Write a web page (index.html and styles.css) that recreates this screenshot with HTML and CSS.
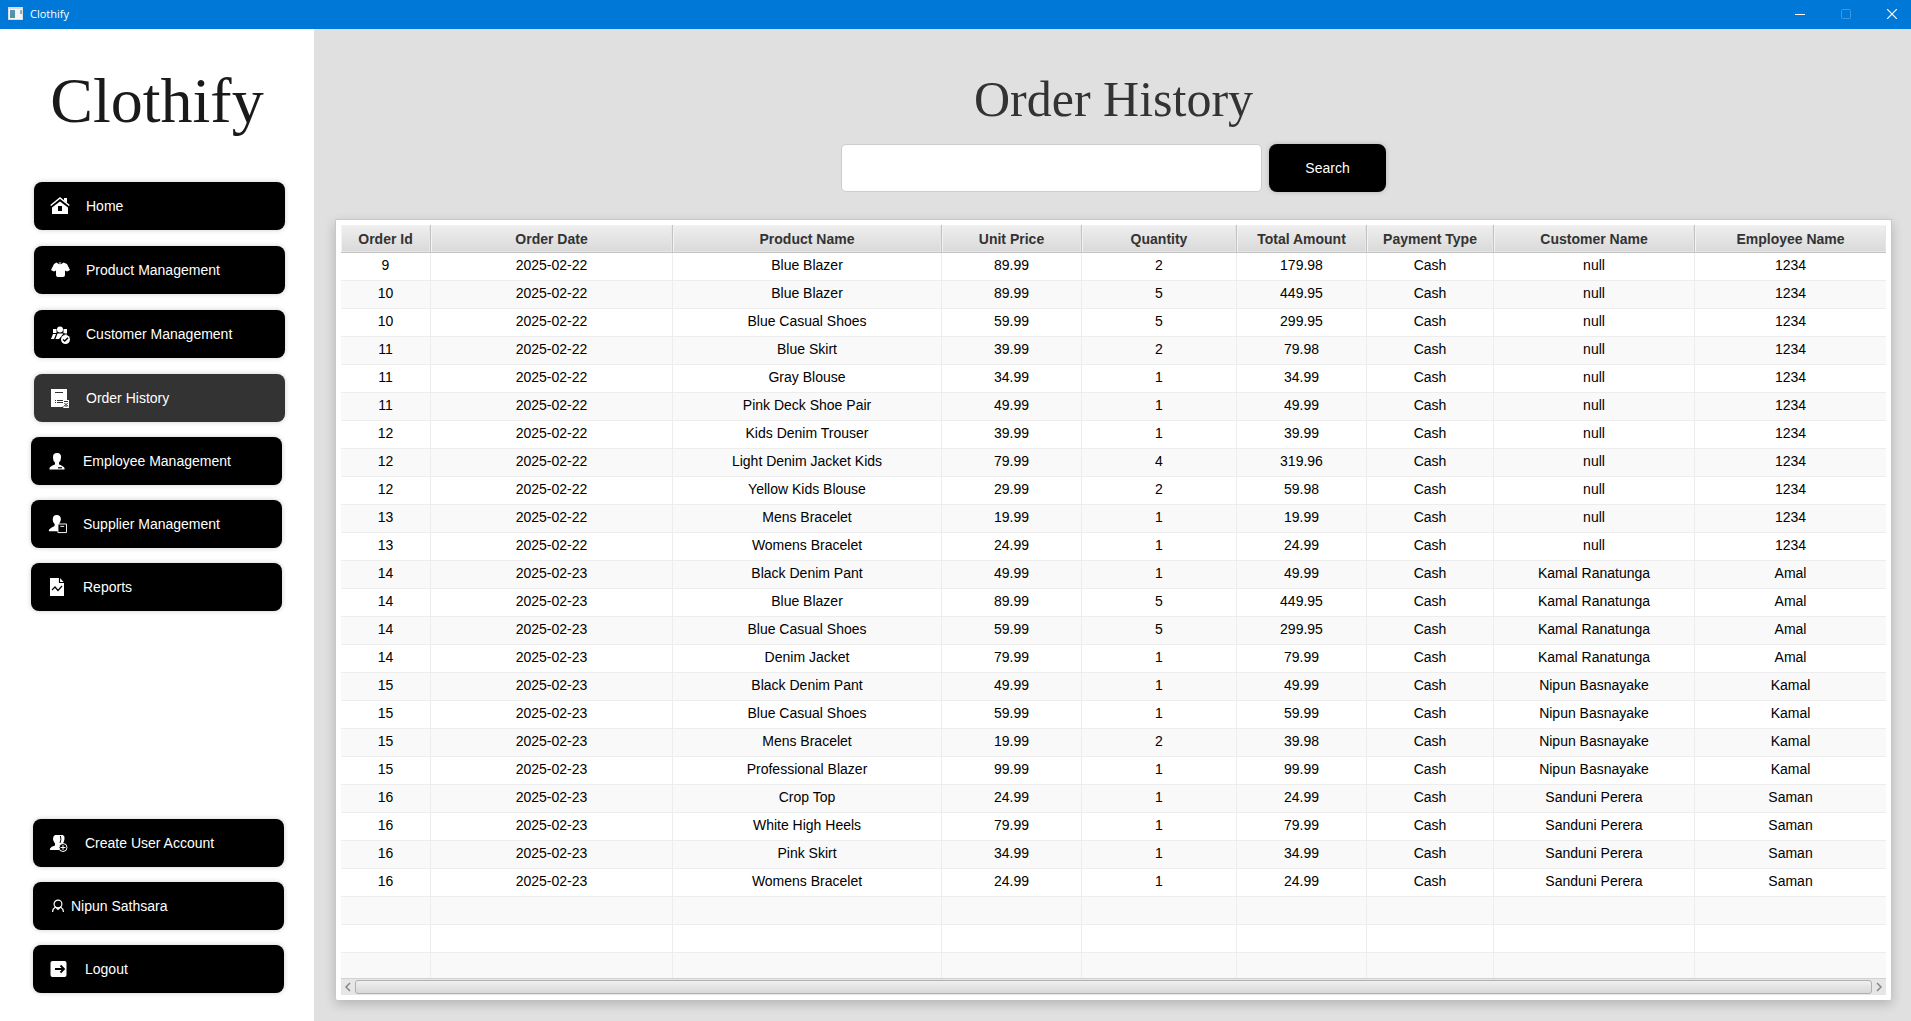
FILE: index.html
```html
<!DOCTYPE html>
<html lang="en">
<head>
<meta charset="utf-8">
<title>Clothify</title>
<link rel="stylesheet" href="styles.css">
</head>
<body>
<header class="titlebar">
  <svg class="app-icon" viewBox="0 0 15 13" aria-hidden="true"><rect width="15" height="13" fill="#d9dcde"/><rect x="1" y="2" width="13" height="10" fill="#f4f4f4"/><rect x="2" y="3" width="5" height="8" fill="#4c9a8c"/><path d="M2 3h5v3L2 9z" fill="#5b8fb5"/><rect x="12" y="3" width="2" height="4" fill="#7fb5b0"/></svg>
  <span class="titlebar-name">Clothify</span>
  <div class="window-controls">
    <button type="button" aria-label="Minimize"><svg viewBox="0 0 10 10"><path d="M0 5.5h10" stroke="#fff"/></svg></button>
    <button type="button" aria-label="Maximize" disabled><svg viewBox="0 0 10 10"><rect x=".5" y=".5" width="9" height="9" rx="1" fill="none" stroke="#3d98e4"/></svg></button>
    <button type="button" aria-label="Close"><svg viewBox="0 0 10 10"><path d="M0 0l10 10M10 0L0 10" stroke="#fff" stroke-width="1.2"/></svg></button>
  </div>
</header>
<div class="app">
  <aside class="sidebar">
    <div class="brand">Clothify</div>
    <nav class="nav">
      <div class="nav-group nav-group-shop">
        <button type="button" class="nav-button"><svg class="icon" viewBox="0 0 20 20"><path fill="#fff" d="M10 5.500l8 6V18H2v-6.500z"/><path fill="none" stroke="#fff" stroke-width="1.500" d="M.7 9.500L10 2l9.300 7.500"/><path fill="#fff" d="M14 2h3v5l-3-2.500z"/><path d="M8 10h4v5H8z"/></svg>Home</button>
        <button type="button" class="nav-button"><svg class="icon" viewBox="0 0 20 20"><path fill="#fff" d="M6.500 2.500Q10 6 13.500 2.500L17 4l3 6-3 1.500-2-1V15q0 2-2 2H8q-2 0-2-2v-4.500l-2 1L1 10l3-6z"/><path fill="#fff" d="M8.500 2.500h3L10 4z"/></svg>Product Management</button>
        <button type="button" class="nav-button"><svg class="icon" viewBox="0 0 20 20"><g fill="#fff"><circle cx="10" cy="5.500" r="3"/><path d="M3 5h3.500v4H3zM13.500 5H17v4h-3.500zM1 15l2-5h3l-2 5zM5.500 15l2-5.500h6L9 15zM14.500 9.500H17v1h-2.500z"/><circle cx="15.500" cy="15.500" r="4.500"/></g><path d="M13 15.500l1.800 1.600 3.200-3.400" fill="none" stroke="#000" stroke-width="1.400"/></svg>Customer Management</button>
        <button type="button" class="nav-button is-active"><svg class="icon" viewBox="0 0 20 20"><path fill="#fff" d="M1 1h16v11h2v8h-6v-1H1z"/><path d="M5 4.500h8M5 12.500h1M7 12.500h6M5 14.500h1M7 14.500h6M13 19.500v-1" stroke="#333"/><path d="M14 13.500h4M14.500 15l1 1.500-1.500 2M17.500 15l-1 1.500 1.500 2M16 17v2" fill="none" stroke="#333"/></svg>Order History</button>
      </div>
      <div class="nav-group nav-group-office">
        <button type="button" class="nav-button"><svg class="icon" viewBox="0 0 20 20"><path fill="#fff" d="M10 2c3 0 4.500 2 4 5q-.2 3-2 4.500v2q4.500 1.500 5.500 3.500v1.500h-15V17q1-2 5.500-3.500v-2Q6 10 6 7 5.500 2 10 2z"/><path fill="#333" d="M11 16h4v1.500h-4z"/></svg>Employee Management</button>
        <button type="button" class="nav-button"><svg class="icon" viewBox="0 0 21 21"><path fill="#fff" d="M10 1c3 0 5 2 4.500 5Q14 9 12.500 10.500v1l-1 6.500H2v-1.500q2-2.500 6-4v-2Q6 9 6 6 6 1 10 1z"/><path d="M11.500 10.500h9v9h-9z" stroke="#fff"/><path d="M14 13h4" stroke="#fff"/></svg>Supplier Management</button>
        <button type="button" class="nav-button"><svg class="icon" viewBox="0 0 20 20"><path fill="#fff" d="M3 1h10l4 4.500V19H3z"/><path d="M12.500 1v4.500H17M5 13l3-3 3 3.500 4-4.500" fill="none" stroke="#000" stroke-width="1.200"/></svg>Reports</button>
      </div>
      <div class="nav-group nav-group-account">
        <button type="button" class="nav-button"><svg class="icon" viewBox="0 0 20 20"><path fill="#fff" d="M6 2h8q2 1 1.500 4-.5 3-1.500 4v7H1v-1.500q1-2 5-3v-2Q4 8 4 6q0-3 2-4z"/><path d="M11.500 3q1 4-.5 7" stroke="#000" fill="none"/><circle cx="14" cy="14.500" r="4" stroke="#fff"/><path d="M11.500 14.500h5M14 12v5" stroke="#fff"/></svg>Create User Account</button>
        <button type="button" class="nav-button nav-button-user"><svg class="icon icon-small" viewBox="0 0 16 16"><g fill="none" stroke="#fff" stroke-width="1.200"><circle cx="9" cy="6" r="3.900"/><path d="M3.500 14q.3-3.500 3-5l2.500 2.500L11.500 9q2.700 1.500 3 5"/></g></svg>Nipun Sathsara</button>
        <button type="button" class="nav-button"><svg class="icon" viewBox="0 0 20 20"><rect x="1.500" y="2" width="16" height="16" rx="2" fill="#fff"/><path d="M6 10h9M11.500 6.500L15 10l-3.500 3.500" fill="none" stroke="#000" stroke-width="1.800"/></svg>Logout</button>
      </div>
    </nav>
  </aside>
  <main class="content">
    <h1 class="page-title">Order History</h1>
    <form class="search">
      <input class="search-field" type="text" aria-label="Search orders">
      <button class="search-button" type="button">Search</button>
    </form>
    <section class="panel">
      <div class="table-view">
        <table class="orders">
          <colgroup><col class="col-id"><col class="col-date"><col class="col-product"><col class="col-price"><col class="col-quantity"><col class="col-total"><col class="col-payment"><col class="col-customer"><col class="col-employee"></colgroup>
          <thead>
            <tr><th>Order Id</th><th>Order Date</th><th>Product Name</th><th>Unit Price</th><th>Quantity</th><th>Total Amount</th><th>Payment Type</th><th>Customer Name</th><th>Employee Name</th></tr>
          </thead>
          <tbody>
            <tr><td>9</td><td>2025-02-22</td><td>Blue Blazer</td><td>89.99</td><td>2</td><td>179.98</td><td>Cash</td><td>null</td><td>1234</td></tr>
            <tr><td>10</td><td>2025-02-22</td><td>Blue Blazer</td><td>89.99</td><td>5</td><td>449.95</td><td>Cash</td><td>null</td><td>1234</td></tr>
            <tr><td>10</td><td>2025-02-22</td><td>Blue Casual Shoes</td><td>59.99</td><td>5</td><td>299.95</td><td>Cash</td><td>null</td><td>1234</td></tr>
            <tr><td>11</td><td>2025-02-22</td><td>Blue Skirt</td><td>39.99</td><td>2</td><td>79.98</td><td>Cash</td><td>null</td><td>1234</td></tr>
            <tr><td>11</td><td>2025-02-22</td><td>Gray Blouse</td><td>34.99</td><td>1</td><td>34.99</td><td>Cash</td><td>null</td><td>1234</td></tr>
            <tr><td>11</td><td>2025-02-22</td><td>Pink Deck Shoe Pair</td><td>49.99</td><td>1</td><td>49.99</td><td>Cash</td><td>null</td><td>1234</td></tr>
            <tr><td>12</td><td>2025-02-22</td><td>Kids Denim Trouser</td><td>39.99</td><td>1</td><td>39.99</td><td>Cash</td><td>null</td><td>1234</td></tr>
            <tr><td>12</td><td>2025-02-22</td><td>Light Denim Jacket Kids</td><td>79.99</td><td>4</td><td>319.96</td><td>Cash</td><td>null</td><td>1234</td></tr>
            <tr><td>12</td><td>2025-02-22</td><td>Yellow Kids Blouse</td><td>29.99</td><td>2</td><td>59.98</td><td>Cash</td><td>null</td><td>1234</td></tr>
            <tr><td>13</td><td>2025-02-22</td><td>Mens Bracelet</td><td>19.99</td><td>1</td><td>19.99</td><td>Cash</td><td>null</td><td>1234</td></tr>
            <tr><td>13</td><td>2025-02-22</td><td>Womens Bracelet</td><td>24.99</td><td>1</td><td>24.99</td><td>Cash</td><td>null</td><td>1234</td></tr>
            <tr><td>14</td><td>2025-02-23</td><td>Black Denim Pant</td><td>49.99</td><td>1</td><td>49.99</td><td>Cash</td><td>Kamal Ranatunga</td><td>Amal</td></tr>
            <tr><td>14</td><td>2025-02-23</td><td>Blue Blazer</td><td>89.99</td><td>5</td><td>449.95</td><td>Cash</td><td>Kamal Ranatunga</td><td>Amal</td></tr>
            <tr><td>14</td><td>2025-02-23</td><td>Blue Casual Shoes</td><td>59.99</td><td>5</td><td>299.95</td><td>Cash</td><td>Kamal Ranatunga</td><td>Amal</td></tr>
            <tr><td>14</td><td>2025-02-23</td><td>Denim Jacket</td><td>79.99</td><td>1</td><td>79.99</td><td>Cash</td><td>Kamal Ranatunga</td><td>Amal</td></tr>
            <tr><td>15</td><td>2025-02-23</td><td>Black Denim Pant</td><td>49.99</td><td>1</td><td>49.99</td><td>Cash</td><td>Nipun Basnayake</td><td>Kamal</td></tr>
            <tr><td>15</td><td>2025-02-23</td><td>Blue Casual Shoes</td><td>59.99</td><td>1</td><td>59.99</td><td>Cash</td><td>Nipun Basnayake</td><td>Kamal</td></tr>
            <tr><td>15</td><td>2025-02-23</td><td>Mens Bracelet</td><td>19.99</td><td>2</td><td>39.98</td><td>Cash</td><td>Nipun Basnayake</td><td>Kamal</td></tr>
            <tr><td>15</td><td>2025-02-23</td><td>Professional Blazer</td><td>99.99</td><td>1</td><td>99.99</td><td>Cash</td><td>Nipun Basnayake</td><td>Kamal</td></tr>
            <tr><td>16</td><td>2025-02-23</td><td>Crop Top</td><td>24.99</td><td>1</td><td>24.99</td><td>Cash</td><td>Sanduni Perera</td><td>Saman</td></tr>
            <tr><td>16</td><td>2025-02-23</td><td>White High Heels</td><td>79.99</td><td>1</td><td>79.99</td><td>Cash</td><td>Sanduni Perera</td><td>Saman</td></tr>
            <tr><td>16</td><td>2025-02-23</td><td>Pink Skirt</td><td>34.99</td><td>1</td><td>34.99</td><td>Cash</td><td>Sanduni Perera</td><td>Saman</td></tr>
            <tr><td>16</td><td>2025-02-23</td><td>Womens Bracelet</td><td>24.99</td><td>1</td><td>24.99</td><td>Cash</td><td>Sanduni Perera</td><td>Saman</td></tr>
            <tr><td></td><td></td><td></td><td></td><td></td><td></td><td></td><td></td><td></td></tr>
            <tr><td></td><td></td><td></td><td></td><td></td><td></td><td></td><td></td><td></td></tr>
            <tr><td></td><td></td><td></td><td></td><td></td><td></td><td></td><td></td><td></td></tr>
          </tbody>
        </table>
      </div>
      <div class="scrollbar">
        <button type="button" class="scroll-arrow" aria-label="Scroll left"><svg viewBox="0 0 6 10"><path d="M5 1L1 5l4 4"/></svg></button>
        <div class="scroll-thumb"></div>
        <button type="button" class="scroll-arrow" aria-label="Scroll right"><svg viewBox="0 0 6 10"><path d="M1 1l4 4-4 4"/></svg></button>
      </div>
    </section>
  </main>
</div>
</body>
</html>
```

FILE: styles.css
```css
* {
  box-sizing: border-box;
}

body {
  margin: 0;
  height: 100vh;
  display: flex;
  flex-direction: column;
  font: 14px/16px "Liberation Sans", Arial, sans-serif;
  color: #000;
  background: #e0e0e0;
}

button {
  font: inherit;
  padding: 0;
  border: 0;
  cursor: pointer;
}

/* Window title bar */
.titlebar {
  flex: none;
  display: flex;
  align-items: center;
  gap: 7px;
  height: 29px;
  padding: 0 0 2px 8px;
  background: #0078d7;
  color: #fff;
  font: 11px/16px "Segoe UI", "Open Sans", sans-serif;
}

.app-icon {
  width: 15px;
  height: 13px;
}

.window-controls {
  display: flex;
  align-self: stretch;
  margin-left: auto;
}

.window-controls button {
  display: grid;
  place-items: center;
  width: 46px;
  padding-left: 8px;
  background: none;
}

.window-controls svg {
  width: 10px;
  height: 10px;
}

.app {
  flex: 1;
  min-height: 0;
  display: flex;
}

/* Sidebar */
.sidebar {
  flex: none;
  display: flex;
  flex-direction: column;
  width: 314px;
  padding: 36px 0 28px;
  background: #fff;
}

.brand {
  margin-bottom: 45px;
  font: 64px/72px "Bodoni MT", "Liberation Serif", serif;
  color: #1a1a1a;
  text-align: center;
}

.nav {
  flex: 1;
  display: flex;
  flex-direction: column;
  gap: 15px;
}

.nav-group {
  display: flex;
  flex-direction: column;
  gap: 15px;
}

.nav-group-shop {
  gap: 16px;
  padding: 0 29px 0 34px;
}

.nav-group-office {
  padding: 0 32px 0 31px;
}

.nav-group-account {
  margin-top: auto;
  padding: 0 30px 0 33px;
}

.nav-button {
  display: flex;
  align-items: center;
  gap: 16px;
  height: 48px;
  padding-left: 16px;
  border-radius: 8px;
  background: #000;
  color: #fff;
  box-shadow: 0 0 5px rgba(0, 0, 0, 0.2);
}

.nav-button.is-active {
  background: #333;
}

.nav-button-user {
  gap: 6px;
}

.icon {
  width: 20px;
  height: 20px;
}

.icon-small {
  width: 16px;
  height: 16px;
}

/* Main area */
.content {
  flex: 1;
  min-width: 0;
  display: flex;
  flex-direction: column;
  padding: 40px 19px 21px 21px;
}

.page-title {
  margin: 0 0 15px;
  font: 50px/60px "Bodoni MT", "Liberation Serif", serif;
  color: #333;
  text-align: center;
}

.search {
  display: flex;
  justify-content: center;
  gap: 7px;
  margin-bottom: 27px;
}

.search-field {
  width: 421px;
  height: 48px;
  padding: 0 12px;
  border: 1px solid #ccc;
  border-radius: 5px;
  background: #fff;
  font: inherit;
}

.search-button {
  width: 117px;
  height: 48px;
  border-radius: 8px;
  background: #000;
  color: #fff;
  box-shadow: 0 0 5px rgba(0, 0, 0, 0.2);
}

.panel {
  flex: 1;
  min-height: 0;
  display: flex;
  flex-direction: column;
  padding: 5px;
  border: 1px solid #c8c8c8;
  border-bottom: 0;
  border-radius: 2px;
  background: #fff;
  box-shadow: 0 4px 12px rgba(0, 0, 0, 0.2);
}

.table-view {
  flex: 1;
  min-height: 0;
  overflow: hidden;
}

.orders {
  width: 100%;
  table-layout: fixed;
  border-collapse: separate;
  border-spacing: 0;
  text-align: center;
}

.col-id { width: 90px; }
.col-date { width: 242px; }
.col-product { width: 269px; }
.col-price { width: 140px; }
.col-quantity { width: 155px; }
.col-total { width: 130px; }
.col-payment { width: 127px; }
.col-customer { width: 201px; }
.col-employee { width: 191px; }

.orders th,
.orders td {
  height: 28px;
  padding: 0 0 4px;
  border-right: 1px solid #ededed;
  border-bottom: 1px solid #ededed;
}

.orders th {
  padding: 0;
  border-color: #c3c3c3;
  background: linear-gradient(#efefef, #d9d9d9);
  box-shadow: inset 1px 1px #f3f3f3, inset -1px -1px #e6e6e6;
  color: #333;
}

.orders th:last-child,
.orders td:last-child {
  border-right: 0;
}

.orders tbody tr:nth-child(even) {
  background: #f9f9f9;
}

/* Horizontal scroll bar */
.scrollbar {
  flex: none;
  display: flex;
  height: 17px;
  padding: 1px 0;
  border-top: 1px solid #d2d2d2;
  background: #e6e6e6;
}

.scroll-arrow {
  display: grid;
  place-items: center;
  width: 14px;
  background: none;
}

.scroll-arrow svg {
  width: 6px;
  height: 10px;
  fill: none;
  stroke: #858585;
  stroke-width: 1.5px;
}

.scroll-thumb {
  flex: 1;
  border: 1px solid #b0b0b0;
  border-radius: 3px;
  background: linear-gradient(#f0f0f0, #d8d8d8);
}
```
